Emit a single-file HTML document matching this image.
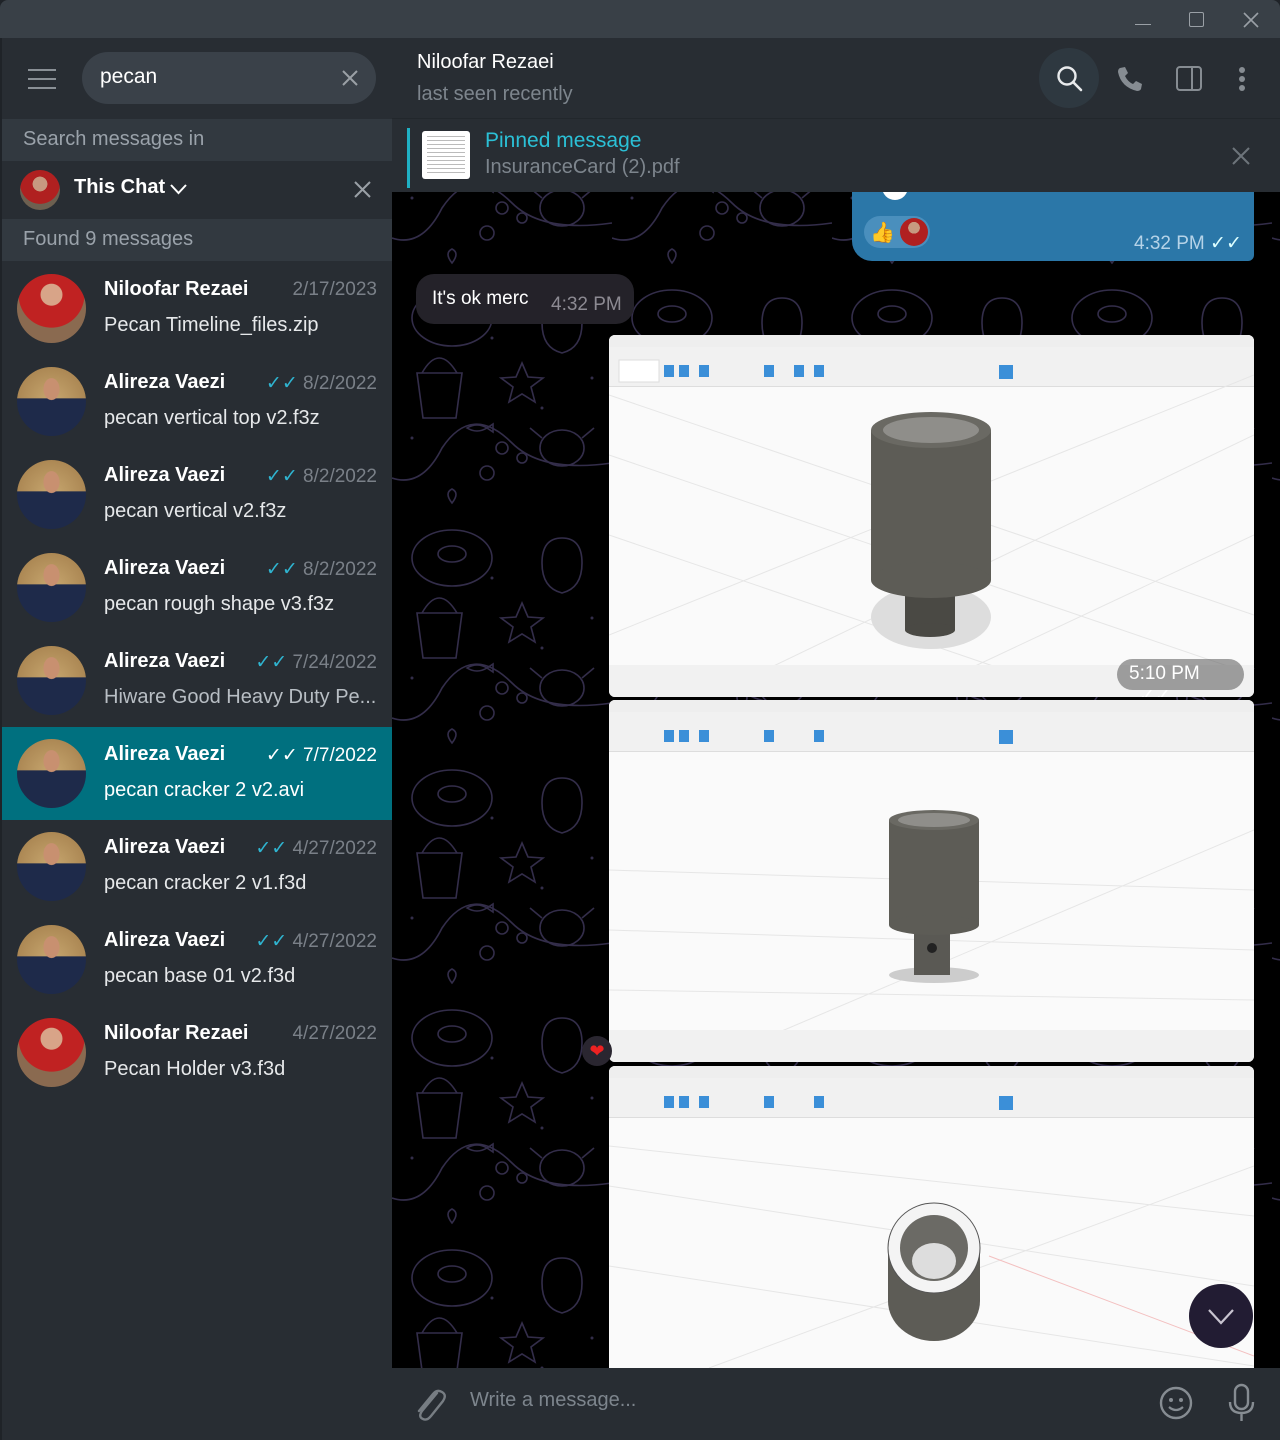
<!DOCTYPE html>
<html><head><meta charset="utf-8">
<style>
*{box-sizing:border-box;margin:0;padding:0}
body{width:1280px;height:1440px;background:#1f2328;font-family:"Liberation Sans",sans-serif;overflow:hidden;position:relative}
.tb{position:absolute;left:0;top:0;width:1280px;height:38px;background:#394047;border-radius:8px 8px 0 0}
.side{position:absolute;left:2px;top:38px;width:390px;height:1402px;background:#282d33}
.chat{position:absolute;left:392px;top:38px;width:888px;height:1402px;background:#000}
.abs{position:absolute}
.name{color:#fff;font-size:20px;font-weight:bold}
.sub{color:#e6e8ea;font-size:20px}
.date{color:#7a8088;font-size:19px}
.row{position:absolute;left:0;width:390px;height:93px}
.av{position:absolute;left:15px;top:12px;width:69px;height:69px;border-radius:50%;overflow:hidden}
.img{position:absolute;left:609px;width:645px;background:#fafafa;overflow:hidden;border-radius:6px}
.tool{position:absolute;left:0;top:0;width:100%;height:52px;background:#f1f1f1;border-bottom:1px solid #ddd}
.al{background:radial-gradient(ellipse at 50% 32%,#c89070 0 16%,transparent 17%),linear-gradient(180deg,transparent 45%,#1e2a4a 46%),radial-gradient(circle,#c8a870,#a07a48)}
</style></head><body>
<div class="tb">
 <div class="abs" style="left:1135px;top:24px;width:16px;height:1px;background:#9aa0a6"></div>
 <div class="abs" style="left:1189px;top:12px;width:15px;height:15px;border:1.5px solid #9aa0a6;border-radius:2px"></div>
 <svg class="abs" style="left:1243px;top:12px" width="16" height="16"><path d="M1 1L15 15M15 1L1 15" stroke="#9aa0a6" stroke-width="1.6"/></svg>
</div>
<div class="side">
 <div class="abs" style="left:26px;top:31px;width:28px;height:2px;background:#8a9096;box-shadow:0 9px 0 #8a9096,0 18px 0 #8a9096"></div>
 <div class="abs" style="left:80px;top:14px;width:294px;height:52px;background:#3a4149;border-radius:26px"></div>
 <div class="abs" style="left:98px;top:27px;color:#fff;font-size:21px">pecan</div>
 <svg class="abs" style="left:340px;top:32px" width="16" height="16"><path d="M1 1L15 15M15 1L1 15" stroke="#9aa0a6" stroke-width="2"/></svg>
 <div class="abs" style="left:0;top:81px;width:390px;height:42px;background:#323940"></div>
 <div class="abs" style="left:21px;top:90px;color:#9aa2aa;font-size:20px">Search messages in</div>
 <div class="abs" style="left:18px;top:132px;width:40px;height:40px;border-radius:50%;background:radial-gradient(circle at 50% 35%,#c79a80 0 22%,#b02020 23% 60%,#6d6050 61%)"></div>
 <div class="abs" style="left:72px;top:138px;color:#fff;font-size:20px;font-weight:bold">This Chat</div>
 <svg class="abs" style="left:168px;top:145px" width="17" height="12"><path d="M1 2L8.5 10L16 2" stroke="#fff" stroke-width="2" fill="none"/></svg>
 <svg class="abs" style="left:352px;top:143px" width="17" height="17"><path d="M1 1L16 16M16 1L1 16" stroke="#9aa0a6" stroke-width="2"/></svg>
 <div class="abs" style="left:0;top:181px;width:390px;height:42px;background:#323940"></div>
 <div class="abs" style="left:21px;top:190px;color:#9aa2aa;font-size:20px">Found 9 messages</div>

 <div class="row" style="top:224px"><div class="av" style="background:radial-gradient(circle at 50% 30%,#d8a488 0 18%,#c02222 19% 55%,#8a6a50 56%)"></div><div class="abs name" style="left:102px;top:16px">Niloofar Rezaei</div><div class="abs date" style="right:15px;top:17px">2/17/2023</div><div class="abs sub" style="left:102px;top:52px">Pecan Timeline_files.zip</div></div>
 <div class="row" style="top:317px"><div class="av al"></div><div class="abs name" style="left:102px;top:16px">Alireza Vaezi</div><div class="abs date" style="right:15px;top:17px"><span style="color:#2fb4d0">✓✓</span> 8/2/2022</div><div class="abs sub" style="left:102px;top:52px">pecan vertical top v2.f3z</div></div>
 <div class="row" style="top:410px"><div class="av al"></div><div class="abs name" style="left:102px;top:16px">Alireza Vaezi</div><div class="abs date" style="right:15px;top:17px"><span style="color:#2fb4d0">✓✓</span> 8/2/2022</div><div class="abs sub" style="left:102px;top:52px">pecan vertical v2.f3z</div></div>
 <div class="row" style="top:503px"><div class="av al"></div><div class="abs name" style="left:102px;top:16px">Alireza Vaezi</div><div class="abs date" style="right:15px;top:17px"><span style="color:#2fb4d0">✓✓</span> 8/2/2022</div><div class="abs sub" style="left:102px;top:52px">pecan rough shape v3.f3z</div></div>
 <div class="row" style="top:596px"><div class="av al"></div><div class="abs name" style="left:102px;top:16px">Alireza Vaezi</div><div class="abs date" style="right:15px;top:17px"><span style="color:#2fb4d0">✓✓</span> 7/24/2022</div><div class="abs sub" style="left:102px;top:52px;color:#b8bec4">Hiware Good Heavy Duty Pe...</div></div>
 <div class="row" style="top:689px;background:#00707f"><div class="av al"></div><div class="abs name" style="left:102px;top:16px">Alireza Vaezi</div><div class="abs date" style="right:15px;top:17px;color:#fff">✓✓ 7/7/2022</div><div class="abs sub" style="left:102px;top:52px;color:#fff">pecan cracker 2 v2.avi</div></div>
 <div class="row" style="top:782px"><div class="av al"></div><div class="abs name" style="left:102px;top:16px">Alireza Vaezi</div><div class="abs date" style="right:15px;top:17px"><span style="color:#2fb4d0">✓✓</span> 4/27/2022</div><div class="abs sub" style="left:102px;top:52px">pecan cracker 2 v1.f3d</div></div>
 <div class="row" style="top:875px"><div class="av al"></div><div class="abs name" style="left:102px;top:16px">Alireza Vaezi</div><div class="abs date" style="right:15px;top:17px"><span style="color:#2fb4d0">✓✓</span> 4/27/2022</div><div class="abs sub" style="left:102px;top:52px">pecan base 01 v2.f3d</div></div>
 <div class="row" style="top:968px"><div class="av" style="background:radial-gradient(circle at 50% 30%,#d8a488 0 18%,#c02222 19% 55%,#8a6a50 56%)"></div><div class="abs name" style="left:102px;top:16px">Niloofar Rezaei</div><div class="abs date" style="right:15px;top:17px">4/27/2022</div><div class="abs sub" style="left:102px;top:52px">Pecan Holder v3.f3d</div></div>
</div>

<div class="chat">
 <svg class="abs" style="left:0;top:0" width="888" height="1402">
  <defs><pattern id="p" width="220" height="240" patternUnits="userSpaceOnUse">
   <g fill="none" stroke="#332d4a" stroke-width="1.6">
    <ellipse cx="60" cy="40" rx="40" ry="28"/><ellipse cx="60" cy="36" rx="14" ry="8"/>
    <path d="M170 20q20 0 20 25q0 25 -20 30q-20 -5 -20 -30q0 -25 20 -25z"/>
    <path d="M25 95h45l-6 45h-33z"/><path d="M30 95q17 -30 35 0"/>
    <path d="M130 85l6 14l15 1l-12 9l4 15l-13 -8l-13 8l4 -15l-12 -9l15 -1z"/>
    <path d="M0 200q30 10 50 -30q30 -45 70 -5q30 30 100 20"/>
    <circle cx="110" cy="170" r="6"/><circle cx="95" cy="195" r="7"/><circle cx="130" cy="180" r="5"/>
    <ellipse cx="170" cy="170" rx="22" ry="18"/><path d="M150 160l-12 -10M190 160l12 -10"/>
    <path d="M60 225q-8 -10 0 -14q8 4 0 14zM60 225q8 -10 0 -14"/>
    <path d="M75 150q10 -6 20 0q-10 6 -20 0zM95 150l6 -4v8z"/>
   </g>
   <g fill="#332d4a"><circle cx="100" cy="60" r="1.5"/><circle cx="150" cy="130" r="1.5"/><circle cx="20" cy="160" r="1.5"/><circle cx="200" cy="100" r="1.5"/></g>
  </pattern></defs>
  <rect width="888" height="1402" fill="url(#p)"/>
 </svg>
 <div class="abs" style="left:0;top:0;width:888px;height:80px;background:#282d33"></div>
 <div class="abs" style="left:25px;top:13px;color:#fff;font-size:20px">Niloofar Rezaei</div>
 <div class="abs" style="left:25px;top:45px;color:#7d858d;font-size:20px">last seen recently</div>
 <div class="abs" style="left:647px;top:10px;width:60px;height:60px;border-radius:50%;background:#2e3840"></div>
 <svg class="abs" style="left:663px;top:26px" width="30" height="30"><circle cx="12" cy="12" r="8.5" stroke="#e8eaec" stroke-width="2.4" fill="none"/><path d="M18 18L26 26" stroke="#e8eaec" stroke-width="2.6" stroke-linecap="round"/></svg>
 <svg class="abs" style="left:724px;top:27px" width="28" height="28"><path d="M4 3l5 -1l3 6l-3 3q3 6 8 8l3 -3l6 3l-1 5q-1 2 -4 2q-16 -4 -19 -19q0 -3 2 -4z" fill="#868c92"/></svg>
 <div class="abs" style="left:784px;top:28px;width:26px;height:25px;border:2.4px solid #868c92;border-radius:4px"><div style="position:absolute;right:7px;top:0;width:2.4px;height:100%;background:#868c92"></div></div>
 <div class="abs" style="left:847px;top:29px;width:6px;height:6px;border-radius:50%;background:#868c92;box-shadow:0 9px 0 #868c92,0 18px 0 #868c92"></div>

 <div class="abs" style="left:0;top:80px;width:888px;height:74px;background:#282d33;border-top:1px solid #22272c"></div>
 <div class="abs" style="left:15px;top:90px;width:3px;height:60px;background:#1fb0c4"></div>
 <div class="abs" style="left:30px;top:93px;width:48px;height:48px;background:#fff;border-radius:3px;padding:5px"><div style="height:100%;background:repeating-linear-gradient(180deg,#bbb 0 1px,#fff 1px 4px)"></div></div>
 <div class="abs" style="left:93px;top:91px;color:#2bc0d6;font-size:21px">Pinned message</div>
 <div class="abs" style="left:93px;top:118px;color:#7d858d;font-size:20px">InsuranceCard (2).pdf</div>
 <svg class="abs" style="left:840px;top:109px" width="18" height="18"><path d="M1 1L17 17M17 1L1 17" stroke="#6d747b" stroke-width="2"/></svg>

 <div class="abs" style="left:460px;top:154px;width:402px;height:69px;background:#2b77a8;border-radius:0 0 6px 20px;overflow:hidden"><div style="position:absolute;left:30px;top:-18px;width:26px;height:26px;border-radius:50%;background:#fff"></div></div>
 <div class="abs" style="left:472px;top:178px;width:66px;height:32px;border-radius:16px;background:#4a8fbd"></div>
 <div class="abs" style="left:478px;top:182px;font-size:20px">👍</div>
 <div class="abs" style="left:508px;top:180px;width:28px;height:28px;border-radius:50%;background:radial-gradient(circle at 50% 35%,#c79a80 0 25%,#b02020 26%)"></div>
 <div class="abs" style="left:742px;top:194px;color:#b5d3e8;font-size:19px">4:32 PM <span style="color:#dff">✓✓</span></div>

 <div class="abs" style="left:24px;top:236px;width:218px;height:50px;background:#242229;border-radius:18px"></div>
 <div class="abs" style="left:40px;top:250px;color:#fff;font-size:19px">It's ok merc</div>
 <div class="abs" style="left:159px;top:256px;color:#8c8a92;font-size:19px">4:32 PM</div>
</div>

<div class="img" style="top:335px;height:362px">
 <div class="tool"></div>
 <svg class="abs" style="left:0;top:0" width="645" height="362"><g stroke="#e6e6e6" stroke-width="1">
  <path d="M0 120L645 340M0 200L645 420M0 60L645 280M100 362L645 100M0 300L645 40M300 362L645 200"/></g>
  <rect x="0" y="0" width="645" height="12" fill="#eee"/><rect x="10" y="25" width="40" height="22" fill="#fff" stroke="#ddd"/>
  <g fill="#3b8fd8"><rect x="55" y="30" width="10" height="12"/><rect x="70" y="30" width="10" height="12"/><rect x="90" y="30" width="10" height="12"/><rect x="155" y="30" width="10" height="12"/><rect x="185" y="30" width="10" height="12"/><rect x="205" y="30" width="10" height="12"/><rect x="390" y="30" width="14" height="14"/></g>
  <ellipse cx="322" cy="282" rx="60" ry="32" fill="#ddd"/>
  <rect x="296" y="230" width="50" height="65" fill="#4a4944"/><ellipse cx="321" cy="295" rx="25" ry="7" fill="#4a4944"/>
  <rect x="262" y="95" width="120" height="150" fill="#5d5c56"/><ellipse cx="322" cy="245" rx="60" ry="18" fill="#5d5c56"/>
  <ellipse cx="322" cy="95" rx="60" ry="18" fill="#6a6963"/><ellipse cx="322" cy="95" rx="48" ry="13" fill="#8f8e8a"/>
  <rect x="0" y="330" width="645" height="32" fill="#f1f1f1"/>
 </svg>
 <div class="abs" style="left:508px;top:324px;width:127px;height:31px;border-radius:16px;background:rgba(100,100,100,.6);color:#fff;font-size:19px;padding:4px 12px">5:10 PM <span style="margin-left:10px">✓✓</span></div>
</div>
<div class="img" style="top:700px;height:362px">
 <div class="tool"></div>
 <svg class="abs" style="left:0;top:0" width="645" height="362"><g stroke="#e6e6e6"><path d="M0 170L645 190M0 230L645 250M0 290L645 300M100 362L645 130"/></g>
  <rect x="0" y="0" width="645" height="12" fill="#eee"/>
  <g fill="#3b8fd8"><rect x="55" y="30" width="10" height="12"/><rect x="70" y="30" width="10" height="12"/><rect x="90" y="30" width="10" height="12"/><rect x="155" y="30" width="10" height="12"/><rect x="205" y="30" width="10" height="12"/><rect x="390" y="30" width="14" height="14"/></g>
  <ellipse cx="325" cy="275" rx="45" ry="8" fill="#ccc"/>
  <rect x="305" y="225" width="36" height="50" fill="#5a5954"/><circle cx="323" cy="248" r="5" fill="#222"/>
  <rect x="280" y="120" width="90" height="105" fill="#5d5c56"/><ellipse cx="325" cy="225" rx="45" ry="10" fill="#5d5c56"/>
  <ellipse cx="325" cy="120" rx="45" ry="10" fill="#6a6963"/><ellipse cx="325" cy="120" rx="36" ry="7" fill="#8f8e8a"/>
  <rect x="0" y="330" width="645" height="32" fill="#f1f1f1"/>
 </svg>
</div>
<div class="img" style="top:1066px;height:302px;border-radius:6px 6px 0 0">
 <div class="tool"></div>
 <svg class="abs" style="left:0;top:0" width="645" height="302"><g stroke="#e6e6e6"><path d="M0 120L645 220M0 200L645 300M0 80L645 150M100 302L645 100"/></g><path d="M380 190L645 290" stroke="#f3c0c0"/>
  <rect x="0" y="0" width="645" height="12" fill="#eee"/>
  <g fill="#3b8fd8"><rect x="55" y="30" width="10" height="12"/><rect x="70" y="30" width="10" height="12"/><rect x="90" y="30" width="10" height="12"/><rect x="155" y="30" width="10" height="12"/><rect x="205" y="30" width="10" height="12"/><rect x="390" y="30" width="14" height="14"/></g>
  <ellipse cx="325" cy="235" rx="46" ry="40" fill="#5d5c56"/><rect x="279" y="180" width="92" height="55" fill="#5d5c56"/>
  <ellipse cx="325" cy="182" rx="46" ry="45" fill="#f4f4f4" stroke="#555"/><ellipse cx="325" cy="182" rx="34" ry="33" fill="#6b6a65"/><ellipse cx="325" cy="195" rx="22" ry="18" fill="#ddd"/>
 </svg>
</div>
<div class="abs" style="left:582px;top:1036px;width:30px;height:30px;border-radius:50%;background:#2a2630;color:#e22;font-size:18px;text-align:center;line-height:30px">❤</div>
<div class="abs" style="left:1189px;top:1284px;width:64px;height:64px;border-radius:50%;background:#221c33"></div>
<svg class="abs" style="left:1207px;top:1308px" width="28" height="18"><path d="M2 2L14 15L26 2" stroke="#c8c4d0" stroke-width="2.2" fill="none"/></svg>

<div class="abs" style="left:392px;top:1368px;width:888px;height:72px;background:#282d33"></div>
<svg class="abs" style="left:412px;top:1385px" width="34" height="38"><path d="M25 8L10 26q-4 6 1 8q4 2 8 -3l12 -15q4 -6 -1 -9q-5 -3 -9 2l-14 17" stroke="#777d83" stroke-width="2.4" fill="none" stroke-linecap="round"/></svg>
<div class="abs" style="left:470px;top:1389px;color:#7d858d;font-size:20px">Write a message...</div>
<svg class="abs" style="left:1158px;top:1385px" width="36" height="36"><circle cx="18" cy="18" r="15" stroke="#868c92" stroke-width="2.4" fill="none"/><circle cx="13" cy="15" r="2" fill="#868c92"/><circle cx="23" cy="15" r="2" fill="#868c92"/><path d="M11 22q7 6 14 0" stroke="#868c92" stroke-width="2.2" fill="none"/></svg>
<svg class="abs" style="left:1226px;top:1383px" width="32" height="40"><rect x="9" y="2" width="13" height="24" rx="6.5" stroke="#868c92" stroke-width="2.4" fill="none"/><path d="M4 19q0 11 11.5 11t11.5 -11M15.5 30v8" stroke="#868c92" stroke-width="2.4" fill="none"/></svg>
</body></html>
